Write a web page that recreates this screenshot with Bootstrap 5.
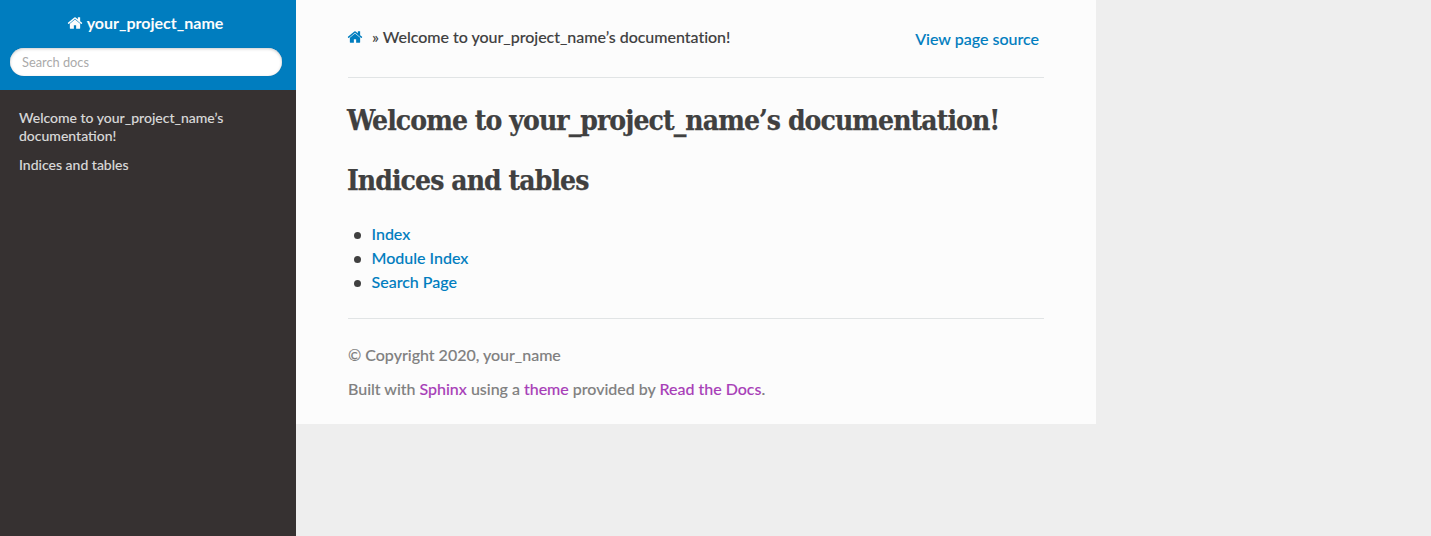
<!DOCTYPE html>
<html lang="en">
<head>
<meta charset="utf-8">
<meta name="viewport" content="width=device-width, initial-scale=1">
<title>Welcome to your_project_name’s documentation!</title>
<link rel="stylesheet" href="https://cdn.jsdelivr.net/npm/bootstrap@5.3.0/dist/css/bootstrap.min.css">
<style>
body{font-family:Lato,"Liberation Sans",sans-serif;font-size:16px;line-height:24px;color:#404040;background:#eee}
a{color:#007dbf;text-decoration:none}
.side{width:296px;background:#363131}
.side-head{height:90px;background:#007dbf;padding:11px 14px 0 10px}
.brand{color:#fcfcfc;font-weight:700;height:24px;margin-bottom:13px;padding-right:2px}
.home{width:16px;height:16px;fill:currentColor;display:block}
.page .home{margin-left:-1px}
.search{height:28px;border:0;border-radius:50px;padding:6px 12px;font-size:12.8px;line-height:1;box-shadow:inset 0 1px 3px #ccc,0 0 1px #1a6a9a}
.search::placeholder{color:#aaa;opacity:1}
.toc a{display:block;color:#d9d9d9;font-size:14px;line-height:18px;padding:5.5px 19px}
.toc{padding-top:13.5px}
.page{width:800px;height:424px;background:#fcfcfc;padding:25px 52px 0}
.crumbs{margin-bottom:28px}
.crumbs span{letter-spacing:-.02px;margin-left:1px}
.source{padding:2px 5px 0 0;height:24px}
.rule{border-top:1px solid #e1e4e5;height:0}
.page h1{font-family:"Roboto Slab","DejaVu Serif Condensed","DejaVu Serif",serif;font-stretch:condensed;font-weight:700;font-size:28px;line-height:34px;margin:26px 0 0 -1px;letter-spacing:-.92px;white-space:nowrap}
.idx{list-style:none;padding-left:24px;margin-top:24px}
.idx a{margin-left:-.5px}
.idx li::before{content:"";display:inline-block;width:7px;height:7px;border-radius:50%;background:#404040;margin:0 11px 0 -18px;vertical-align:1px}
.foot{color:gray;margin-top:24px;letter-spacing:-.015px}
.foot p{margin-bottom:10px}
.foot a{color:#a83fb8}
.txt{font-weight:500;-webkit-text-stroke:.1px currentColor}
.page h1{-webkit-text-stroke:.25px currentColor}
</style>
<script src="https://cdn.jsdelivr.net/npm/bootstrap@5.3.0/dist/js/bootstrap.bundle.min.js"></script>
</head>
<body>
<svg class="d-none"><symbol id="home" viewBox="0 0 1792 1792"><path d="M1472 992v480q0 26-19 45t-45 19h-384v-384h-256v384h-384q-26 0-45-19t-19-45v-480q0-1 .5-3t.5-3l575-474 575 474q1 2 1 6zm223-69l-62 74q-8 9-21 11h-3q-13 0-21-7l-692-577-692 577q-12 8-24 7-13-2-21-11l-62-74q-8-10-7-23.5t11-21.5l719-599q32-26 76-26t76 26l244 204v-195q0-14 9-23t23-9h192q14 0 23 9t9 23v408l219 182q10 8 11 21.5t-7 23.5z"/></symbol></svg>
<div class="d-flex align-items-start">
  <nav class="side vh-100 flex-shrink-0">
    <div class="side-head">
      <a class="brand d-flex justify-content-center align-items-center" href="#"><svg class="home me-1"><use href="#home"/></svg>your_project_name</a>
      <input class="search form-control" type="text" placeholder="Search docs">
    </div>
    <div class="toc txt"><a href="#">Welcome to your_project_name’s documentation!</a><a href="#">Indices and tables</a></div>
  </nav>
  <main class="page txt flex-shrink-0">
    <div class="crumbs d-flex justify-content-between">
      <div class="d-flex"><a href="#" class="me-2"><svg class="home mt-1"><use href="#home"/></svg></a><span>» Welcome to your_project_name’s documentation!</span></div>
      <a href="#" class="source">View page source</a>
    </div>
    <div class="rule"></div>
    <h1>Welcome to your_project_name’s documentation!</h1>
    <h1>Indices and tables</h1>
    <ul class="idx mb-4"><li><a href="#">Index</a></li><li><a href="#">Module Index</a></li><li><a href="#">Search Page</a></li></ul>
    <div class="rule"></div>
    <footer class="foot"><p>© Copyright 2020, your_name</p><p class="mb-0">Built with <a href="#">Sphinx</a> using a <a href="#">theme</a> provided by <a href="#">Read the Docs</a>.</p></footer>
  </main>
</div>
</body>
</html>
